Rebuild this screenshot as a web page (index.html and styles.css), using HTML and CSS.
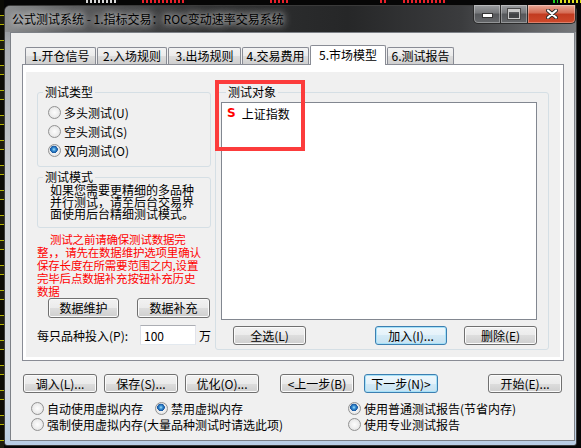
FILE: index.html
```html
<!DOCTYPE html>
<html lang="zh-CN">
<head>
    <meta charset="UTF-8">
    <title>公式测试系统</title>
    <link rel="stylesheet" href="styles.css">
</head>
<body>

    <!-- quote screen behind the dialog (only glyph bottoms peek out) -->
    <div class="quotes">
        <i class="q q1"></i>
        <i class="q q2"></i>
        <i class="q q3"></i>
        <i class="q q4"></i>
        <i class="q q5"></i>
        <i class="q q6"></i>
        <i class="q q7"></i>
    </div>
    <div class="rail"></div>

    <div class="window">
        <div class="titlebar">
            <span class="title">公式测试系统 - 1.指标交易：ROC变动速率交易系统</span>
            <div class="caption">
                <span class="cap cap-min"><i></i></span>
                <span class="cap cap-max"><i></i></span>
                <span class="cap cap-close">
                    <svg width="12" height="10" viewBox="0 0 12 10">
                        <path d="M2 1.5 L10 8.5 M10 1.5 L2 8.5" stroke="#2a2a2a" stroke-width="4" stroke-linecap="round"/>
                        <path d="M2 1.5 L10 8.5 M10 1.5 L2 8.5" stroke="#fff" stroke-width="2.2" stroke-linecap="round"/>
                    </svg>
                </span>
            </div>
        </div>

        <div class="client">
            <!-- tabs -->
            <div class="tabs">
                <span class="tab t1">1.开仓信号</span>
                <span class="tab t2">2.入场规则</span>
                <span class="tab t3">3.出场规则</span>
                <span class="tab t4">4.交易费用</span>
                <span class="tab t5 active">5.市场模型</span>
                <span class="tab t6">6.测试报告</span>
            </div>

            <div class="panel">
                <div class="page">
                    <div class="col-left">
                        <fieldset class="group">
                            <legend>测试类型</legend>
                            <div class="radios">
                                <label class="opt"><input type="radio" name="dir"><span>多头测试(U)</span></label>
                                <label class="opt"><input type="radio" name="dir"><span>空头测试(S)</span></label>
                                <label class="opt"><input type="radio" name="dir" checked><span>双向测试(O)</span></label>
                            </div>
                        </fieldset>

                        <fieldset class="group">
                            <legend>测试模式</legend>
                            <p class="mode-text">如果您需要更精细的多品种并行测试，请至后台交易界面使用后台精细测试模式。</p>
                        </fieldset>

                        <p class="warn">测试之前请确保测试数据完<br>整，，请先在数据维护选项里确认<br>保存长度在所需要范围之内,设置<br>完毕后点数据补充按钮补充历史<br>数据</p>

                        <div class="data-btns">
                            <button class="btn w71">数据维护</button>
                            <button class="btn w73">数据补充</button>
                        </div>

                        <div class="invest">
                            <label for="amount">每只品种投入(P):</label>
                            <input id="amount" class="num" type="text" value="100">
                            <span>万</span>
                        </div>
                    </div>

                    <fieldset class="group target">
                        <legend>测试对象</legend>
                        <div class="listbox">
                            <div class="item"><b>S</b>上证指数</div>
                        </div>
                        <div class="list-btns">
                            <button class="btn w73">全选(L)</button>
                            <button class="btn w72 default push">加入(I)...</button>
                            <button class="btn w73 del">删除(E)</button>
                        </div>
                    </fieldset>

                    <!-- annotation box drawn over the screenshot -->
                    <div class="mark"></div>
                </div>
            </div>

            <!-- wizard buttons -->
            <div class="actions">
                <button class="btn w74">调入(L)...</button>
                <button class="btn w74">保存(S)...</button>
                <button class="btn w74">优化(O)...</button>
                <button class="btn w74 prev">&lt;上一步(B)</button>
                <button class="btn w74 default next">下一步(N)&gt;</button>
                <button class="btn w74 start">开始(E)...</button>
            </div>

            <div class="options">
                <div class="opt-left">
                    <div class="opt-row">
                        <label class="opt"><input type="radio" name="vm"><span>自动使用虚拟内存</span></label>
                        <label class="opt vm-off"><input type="radio" name="vm" checked><span>禁用虚拟内存</span></label>
                    </div>
                    <div class="opt-row">
                        <label class="opt"><input type="radio" name="vm"><span>强制使用虚拟内存(大量品种测试时请选此项)</span></label>
                    </div>
                </div>
                <div class="opt-right">
                    <div class="opt-row">
                        <label class="opt"><input type="radio" name="report" checked><span>使用普通测试报告(节省内存)</span></label>
                    </div>
                    <div class="opt-row">
                        <label class="opt"><input type="radio" name="report"><span>使用专业测试报告</span></label>
                    </div>
                </div>
            </div>
        </div>
    </div>

</body>
</html>
```

FILE: styles.css
```css
* {
    box-sizing: border-box;
}
html, body {
    margin: 0;
}
body {
    position: relative;
    width: 581px;
    height: 448px;
    overflow: hidden;
    background: #060606;
    font-family: "Noto Sans CJK SC", "Noto Sans", sans-serif;
    font-size: 12px;
    color: #000;
}

/* background quote screen */
.quotes {
    position: absolute;
    left: 0;
    top: 0;
    width: 581px;
    height: 5px;
}
.q {
    position: absolute;
    top: 0;
    height: 3px;
    background: repeating-linear-gradient(to right, currentColor 0, currentColor 2px, transparent 2px, transparent 4px);
    color: #e8202a;
}
.q1 { left: 86px; width: 32px; color: #d8d8d8; }
.q2 { left: 142px; width: 44px; }
.q3 { left: 270px; width: 20px; }
.q4 { left: 380px; width: 6px; }
.q5 { left: 403px; width: 44px; }
.q6 { left: 553px; width: 5px; color: #20d020; }
.q7 { left: 560px; width: 21px; color: #e0e020; }
.rail {
    position: absolute;
    left: 0;
    top: 0;
    width: 4px;
    height: 448px;
    background: repeating-linear-gradient(to bottom, #0c0c06 0, #0c0c06 15px, #b5b300 15px, #b5b300 16px, #1d1d10 16px, #1d1d10 24px, #b5b300 24px, #b5b300 25px);
}

/* dialog window */
.window {
    position: absolute;
    left: 4px;
    top: 5px;
    width: 573px;
    height: 441px;
    border: 1px solid #3a3a3a;
    border-radius: 6px 6px 3px 3px;
    background: linear-gradient(to bottom, #7b7d80 0, #a9adb2 40px, #cdd1d6 200px, #d6dbe1 380px, #b8cde4 100%);
    display: flex;
    flex-direction: column;
}
.titlebar {
    display: flex;
    height: 26px;
    border-radius: 5px 5px 0 0;
    background: linear-gradient(to right, #8c8e90 0, #5a5b5d 12%, #303132 35%, #262728 60%, #3b3c3e 80%, #77797c 100%);
}
.title {
    flex: 1;
    padding-left: 7px;
    line-height: 26px;
    color: #000;
    white-space: nowrap;
    text-shadow: 0 0 6px rgba(255, 255, 255, 0.75), 0 0 10px rgba(255, 255, 255, 0.55), 0 0 14px rgba(255, 255, 255, 0.4);
}
.caption {
    display: flex;
    margin-top: -1px;
    height: 19px;
}
.cap {
    display: flex;
    align-items: center;
    justify-content: center;
    height: 19px;
    border: 1px solid #2a2a2a;
    border-top: 0;
    box-shadow: inset 0 0 0 1px rgba(255, 255, 255, 0.3);
}
.cap-min {
    width: 28px;
    border-radius: 0 0 0 5px;
    background: linear-gradient(#9a9c9f, #76787b 45%, #55575a 50%, #66686b);
}
.cap-max {
    width: 27px;
    border-left: 0;
    background: linear-gradient(#9a9c9f, #76787b 45%, #55575a 50%, #66686b);
}
.cap-close {
    width: 48px;
    border-left: 0;
    border-radius: 0 0 5px 0;
    background: linear-gradient(#e9a896, #d46a52 45%, #c23b20 50%, #cf4a2c);
}
.cap-min i {
    display: block;
    width: 11px;
    height: 5px;
    margin-top: 3px;
    background: #fff;
    border: 1px solid #333;
}
.cap-max i {
    display: block;
    width: 12px;
    height: 10px;
    border: 1px solid #c9c9c9;
    border-top-width: 3px;
    background: rgba(0, 0, 0, 0.25);
    box-shadow: 0 0 0 1px #4a4a4a;
}

/* client area */
.client {
    flex: 1;
    margin: 0 1px 4px 5px;
    border: 1px solid #7d8187;
    background: #f0f0f0;
    padding-top: 12px;
}

/* tabs */
.tabs {
    display: flex;
    align-items: flex-end;
    gap: 1px;
    height: 19px;
    margin-left: 14px;
}
.tab {
    height: 17px;
    border: 1px solid #898c95;
    border-bottom: 0;
    border-radius: 2px 2px 0 0;
    background: linear-gradient(#f3f3f3, #ebebeb 50%, #dddddd 50%, #cfcfcf);
    text-align: center;
    line-height: 15px;
    white-space: nowrap;
}
.tab.active {
    position: relative;
    z-index: 1;
    height: 20px;
    margin-bottom: -1px;
    background: #fff;
    line-height: 18px;
}
.t1 { width: 71px; }
.t2 { width: 70px; }
.t3 { width: 73px; }
.t4 { width: 67px; }
.t5 { width: 76px; }
.t6 { width: 67px; }

.panel {
    margin: 0 10px 0 11px;
    height: 297px;
    border: 1px solid #898c95;
    background: #fff;
    padding: 7px 3px 3px 3px;
}
.page {
    position: relative;
    display: flex;
    gap: 4px;
    height: 285px;
    padding: 13px 11px 0 11px;
    background: #f0f0f0;
}
.col-left {
    width: 174px;
    display: flex;
    flex-direction: column;
}

/* group boxes */
.group {
    margin: 0;
    padding: 0;
    min-width: 0;
    border: 1px solid #d5dfe5;
    border-radius: 3px;
}
.group legend {
    margin-left: 5px;
    padding: 0 2px;
    line-height: 14px;
}
.group + .group {
    margin-top: 3px;
}
.radios {
    padding: 4px 0 6px 10px;
}
.radios .opt {
    height: 19px;
}
.mode-text {
    margin: 0;
    padding: 0 12px 7px 12px;
    line-height: 12px;
}

/* radio buttons */
.opt {
    display: flex;
    align-items: center;
    white-space: nowrap;
}
.opt input {
    appearance: none;
    -webkit-appearance: none;
    width: 13px;
    height: 13px;
    margin: 0 3px 0 0;
    border: 1px solid #929292;
    border-radius: 50%;
    background: radial-gradient(circle, #fdfdfd 0, #ebebeb 60%, #d2d2d2 100%);
}
.opt input:checked {
    background:
        radial-gradient(circle at 45% 40%, #a9e3fb 0, #3b93d6 1.6px, #1b5aa3 3.3px, #1b5aa3 3.6px, transparent 4px),
        radial-gradient(circle, #fdfdfd 0, #ebebeb 60%, #d2d2d2 100%);
}

.warn {
    margin: 5px 0 0 0;
    color: #ff0000;
    font-size: 11.5px;
    line-height: 13px;
    text-indent: 13px;
    letter-spacing: -0.2px;
    white-space: nowrap;
}

/* buttons */
.btn {
    height: 19px;
    padding: 0;
    border: 1px solid #707070;
    border-radius: 3px;
    background: linear-gradient(#f2f2f2, #ebebeb 50%, #dddddd 50%, #cfcfcf);
    box-shadow: inset 0 0 0 1px #fbfbfb;
    font-family: inherit;
    font-size: 12px;
    line-height: 16px;
    color: #000;
    white-space: nowrap;
}
.btn.default {
    border-color: #3c7fb1;
    box-shadow: inset 0 0 0 1px #a6e1f8;
    background: linear-gradient(#eef7fc, #e4f2fa 50%, #d4eaf6 50%, #c6e2f2);
}
.w71 { width: 71px; }
.w72 { width: 72px; }
.w73 { width: 73px; }
.w74 { width: 74px; }

.data-btns {
    display: flex;
    gap: 18px;
    margin-left: 11px;
}
.data-btns .btn {
    height: 20px;
}
.invest {
    display: flex;
    align-items: center;
    margin-top: 7px;
    height: 20px;
}
.invest label {
    width: 103px;
    white-space: nowrap;
}
.num {
    width: 56px;
    height: 20px;
    margin: 0 3px 0 0;
    padding: 0 3px;
    border: 1px solid;
    border-color: #abadb3 #e2e3ea #e3e9ef #dbdfe6;
    background: #fff;
    font-family: inherit;
    font-size: 12px;
    outline: none;
}

/* target list */
.target {
    width: 334px;
    align-self: flex-start;
    padding: 3px 0 4px 5px;
}
.listbox {
    width: 316px;
    height: 218px;
    border: 1px solid #828790;
    background: #fff;
}
.item {
    display: flex;
    align-items: center;
    height: 16px;
    margin-top: 2px;
    padding-left: 5px;
}
.item b {
    font-family: "DejaVu Sans", sans-serif;
    font-size: 12px;
    color: #ff0000;
    margin-right: 6px;
}
.list-btns {
    display: flex;
    width: 316px;
    margin-top: 6px;
    padding-left: 12px;
}
.list-btns .push {
    margin-left: auto;
}
.list-btns .del {
    margin-left: 17px;
}

.mark {
    position: absolute;
    left: 189px;
    top: 8px;
    width: 90px;
    height: 71px;
    border: 4px solid #fc3c3c;
}

/* bottom bar */
.actions {
    display: flex;
    gap: 7px;
    margin-top: 13px;
    padding: 0 12px;
}
.actions .prev {
    margin-left: 14px;
}
.actions .next {
    margin-left: 3px;
}
.actions .start {
    margin-left: auto;
}

.options {
    display: flex;
    margin-top: 7px;
    padding-left: 20px;
}
.opt-left {
    width: 317px;
}
.opt-row {
    display: flex;
    height: 16px;
}
.vm-off {
    margin-left: 12px;
}
```
